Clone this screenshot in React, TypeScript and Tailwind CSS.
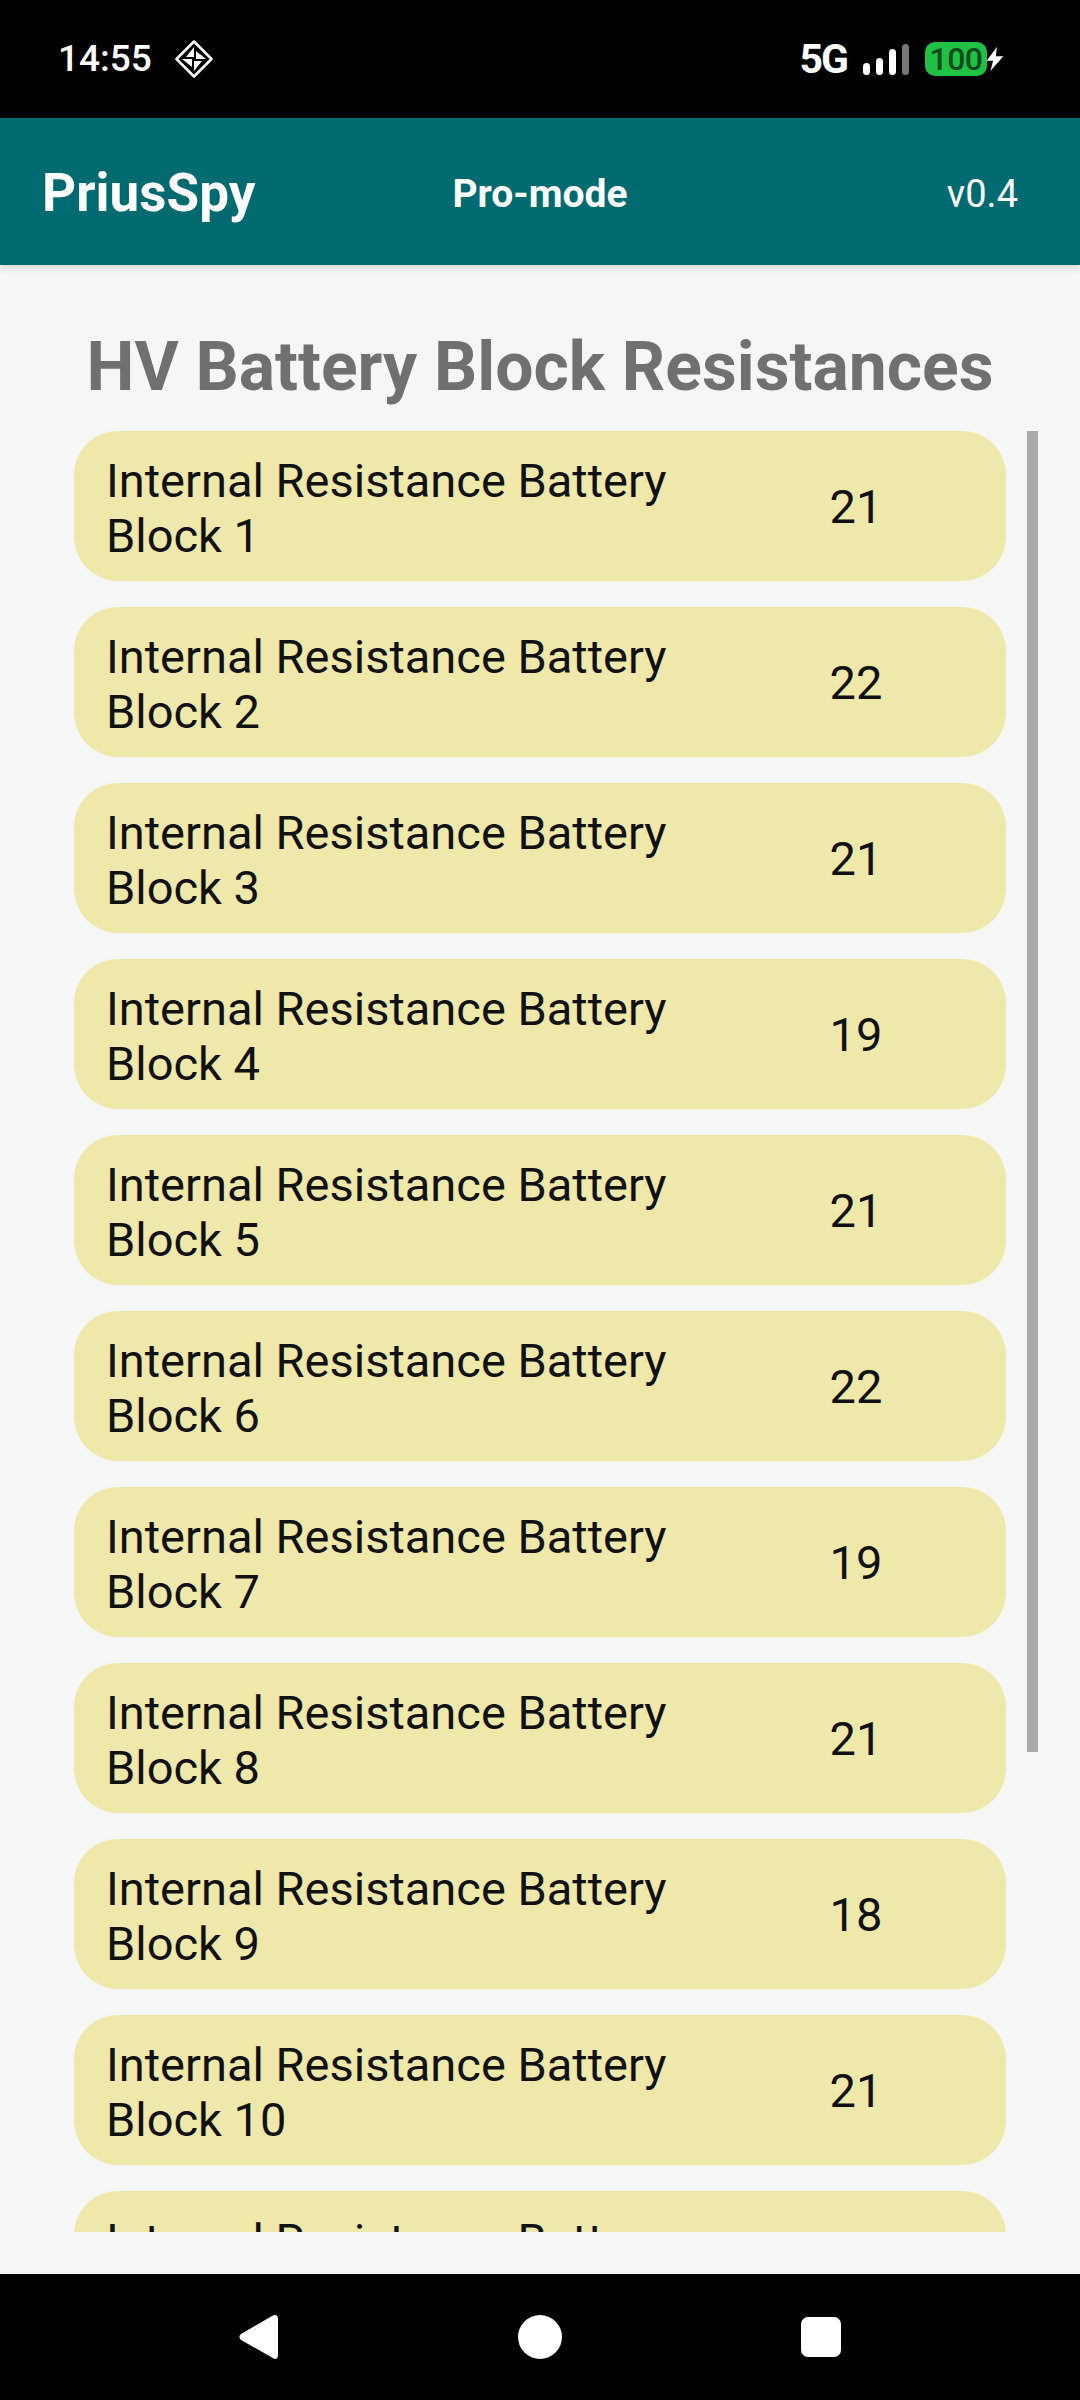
const values = [21, 22, 21, 19, 21, 22, 19, 21, 18, 21, 20];

function BlockRow({ index, value }: { index: number; value: number }) {
  return (
    <div className="flex h-[150px] shrink-0 items-center rounded-[44px] bg-[#eee8aa] pl-[32px] text-[47px] leading-[55px] text-[#111]">
      <div className="w-[630px] pt-[3px]">Internal Resistance Battery Block {index}</div>
      <div className="ml-[65px] w-[110px] text-center">{value}</div>
    </div>
  );
}

function StatusBar() {
  return (
    <div className="flex h-[118px] shrink-0 items-center justify-between bg-black pl-[58px] pr-[74px] text-white">
      <div className="flex items-center gap-[23px]">
        <span className="text-[37px] font-medium">14:55</span>
        <svg width="38" height="38" viewBox="0 0 38 38" fill="none">
          <path d="M19 1.500 36.500 19 19 36.500 1.500 19Z" stroke="#fff" strokeWidth="2.500" strokeLinejoin="round" />
          <path d="M19 7v10h-8zM31 19H21v-8zM19 31V21h8zM7 19h10v8z" fill="#fff" />
        </svg>
      </div>
      <div className="flex items-center">
        <span className="text-[41px] font-bold leading-none tracking-[-2px]">5G</span>
        <div className="ml-[16px] flex items-end gap-[6px]">
          <div className="h-[12px] w-[7px] rounded-full bg-white" />
          <div className="h-[17px] w-[7px] rounded-full bg-white" />
          <div className="h-[26px] w-[7px] rounded-full bg-white" />
          <div className="h-[31px] w-[7px] rounded-full bg-[#777]" />
        </div>
        <div className="ml-[16px] flex h-[34px] w-[62px] items-center justify-center rounded-[10px] bg-[#1fc244] text-[32px] font-medium leading-none tracking-[-0.5px] text-[#0b4a1c]">
          100
        </div>
        <svg width="22" height="26" viewBox="0 0 22 28" className="-ml-[3px]">
          <path d="M13 1 2 16h7l-3 11 14-16h-8z" fill="#fff" />
        </svg>
      </div>
    </div>
  );
}

function NavBar() {
  return (
    <div className="flex h-[126px] shrink-0 items-start justify-center bg-black pt-[41px]">
      <div className="flex w-[518px] justify-center">
        <svg width="40" height="44" viewBox="0 0 40 44">
          <path d="M36 0c2 0 3 2 3 4v36c0 2-1 4-3 4-1 0-2-1-3-1.500L2 25c-2-1.500-2-4.500 0-6L33 1c1-.5 2-1 3-1z" fill="#fff" />
        </svg>
      </div>
      <div className="h-[44px] w-[44px] rounded-full bg-white" />
      <div className="flex w-[518px] justify-center">
        <div className="mt-[2px] h-[40px] w-[40px] rounded-[7px] bg-white" />
      </div>
    </div>
  );
}

export default function App() {
  return (
    <div className="flex h-[2400px] w-[1080px] flex-col overflow-hidden bg-[#f5f7f6] font-['Roboto',sans-serif]">
      <StatusBar />
      <div className="relative z-10 flex h-[147px] shrink-0 items-center justify-between bg-[#006a71] pl-[42px] pr-[62px] pt-[5px] text-white shadow-[0_3px_8px_rgba(0,0,0,0.12)]">
        <span className="w-[320px] text-[53px] font-bold">PriusSpy</span>
        <span className="text-[39px] font-bold">Pro-mode</span>
        <span className="w-[300px] text-right text-[38px]">v0.4</span>
      </div>
      <div className="flex min-h-0 flex-1 flex-col">
        <div className="flex h-[166px] shrink-0 items-center justify-center pt-[40px] text-[67.800px] font-bold text-[#707070]">
          HV Battery Block Resistances
        </div>
        <div className="relative ml-[74px] h-[1801px] w-[964px] overflow-hidden">
          <div className="flex w-[932px] flex-col gap-[26px]">
            {values.map((value, i) => (
              <BlockRow key={i} index={i + 1} value={value} />
            ))}
          </div>
          <div className="absolute right-0 top-0 h-[1321px] w-[11px] bg-[#a9abab]" />
        </div>
        <div className="flex-1" />
      </div>
      <NavBar />
    </div>
  );
}
